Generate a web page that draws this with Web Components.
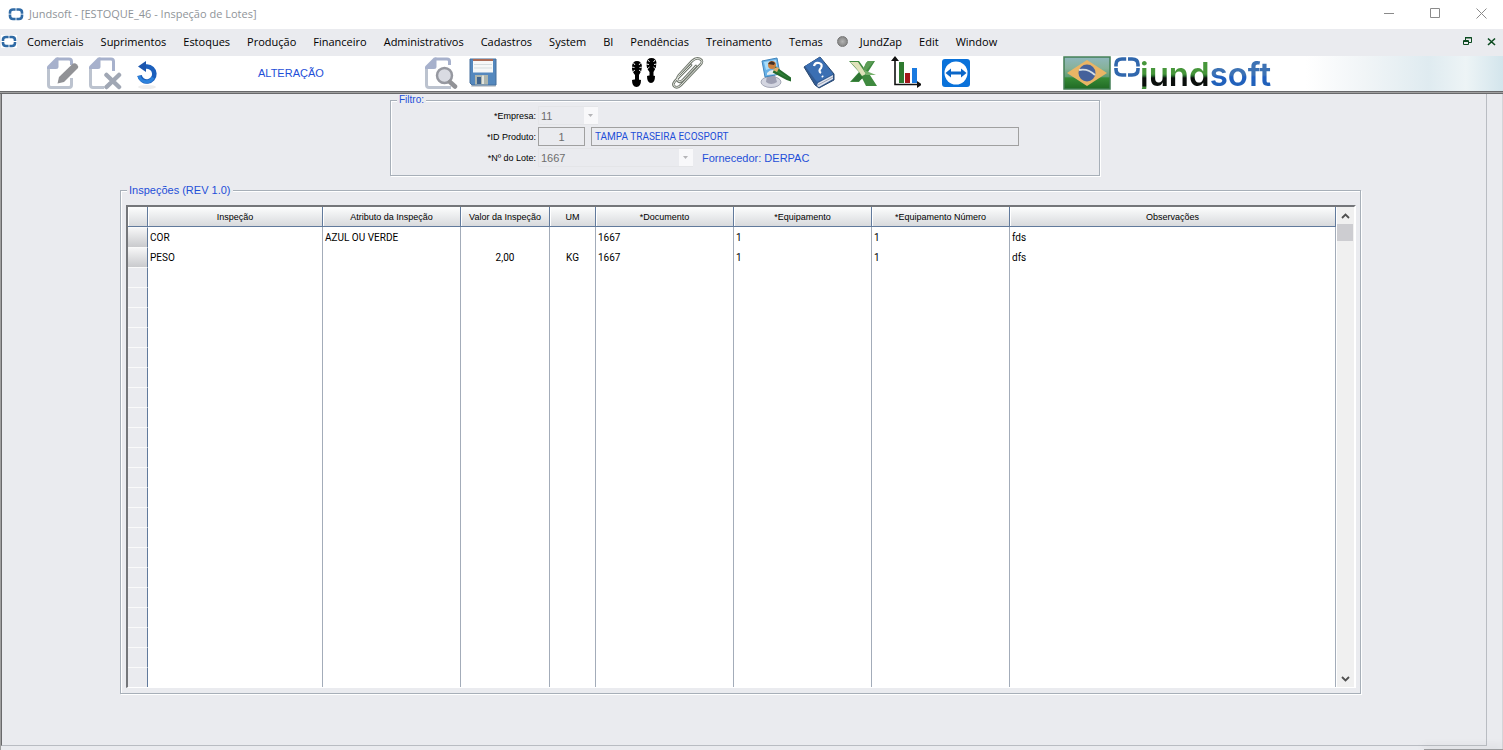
<!DOCTYPE html>
<html lang="pt-BR">
<head>
<meta charset="utf-8">
<title>Jundsoft - [ESTOQUE_46 - Inspeção de Lotes]</title>
<style>
html, body { margin: 0; min-height: 100%; background: #eaebef; }
body {
  --ui: "Open Sans", "Noto Sans", sans-serif;
  --text: "Liberation Sans", Arial, sans-serif;
  --data: Roboto, "Liberation Sans", sans-serif;
  --face: #eaebef;
  --blue: #1f4fd8;
  --edge: #a7afb8;
  font: 9px/16px var(--text);
  color: #000;
}
</style>
</head>
<body>
<jund-app></jund-app>

<template id="t-title">
  <style>
    :host { display: flex; align-items: center; box-sizing: border-box; height: 29px; background: #fff; padding: 0 0 2px 8px; font: 11px/16px var(--ui); color: #8f9499; }
    svg { display: block; }
    h1 { font: inherit; margin: 0 auto 0 5px; }
    button { width: 46px; height: 27px; padding: 0 0 0 2px; border: 0; background: none; display: grid; place-items: center; }
  </style>
  <svg width="16" height="16" viewBox="0 0 16 16" fill="none" stroke="#2f6aa5" stroke-width="2.600"><path d="M7.600 3.500H5Q2 3.500 2 6.500V7.800M8.400 3.500H11Q14 3.500 14 6.500V7.800M2 8.600V10Q2 13 5 13H7.600M14 8.600V10Q14 13 11 13H8.400"/></svg>
  <h1><slot></slot></h1>
  <button aria-label="Minimizar"><svg width="11" height="11" stroke="#8a8a8a"><path d="M0 5.500H10"/></svg></button>
  <button aria-label="Maximizar"><svg width="11" height="11" stroke="#8a8a8a" fill="none"><path d="M.5 .5H9.500V9.500H.5Z"/></svg></button>
  <button aria-label="Fechar"><svg width="11" height="11" stroke="#8a8a8a"><path d="M.5 .5L10.500 10.500M10.500 .5L.5 10.500"/></svg></button>
</template>

<template id="t-menu">
  <style>
    :host { display: flex; align-items: center; box-sizing: border-box; height: 27px; background: var(--face); padding: 0 7px 2px 1px; }
    .mark { display: block; margin-right: 10px; background: #fff; }
    nav { display: flex; gap: 17px; flex: 1; align-items: center; }
    .win { border: 0; background: none; padding: 0; margin-left: 15px; display: grid; }
    svg { display: block; }
  </style>
  <svg class="mark" width="16" height="13" viewBox="0 0 16 13" fill="none" stroke="#2f6aa5" stroke-width="2.600"><path d="M7.600 2H5Q2 2 2 5V6M8.400 2H11Q14 2 14 5V6M2 7V8Q2 11 5 11H7.600M14 7V8Q14 11 11 11H8.400"/></svg>
  <nav><slot></slot></nav>
  <button class="win" aria-label="Restaurar janela"><svg width="9" height="9" fill="none" stroke="#0c4a20"><path d="M3 .5H8.500V5.500H6M2.500 0V3M2 1H9M.5 3.500H5.500V7.500H.5ZM0 4.500H6"/></svg></button>
  <button class="win" aria-label="Fechar janela"><svg width="9" height="9" fill="none" stroke="#0c4a20" stroke-width="1.600"><path d="M1 1.500L8 8M8 1.500L1 8"/></svg></button>
</template>

<template id="t-item">
  <style>
    :host { display: block; }
    button { font: 11px/20px var(--ui); border: 0; padding: 0; background: none; color: #000; white-space: nowrap; display: block; }
  </style>
  <button><slot></slot></button>
</template>

<template id="t-tool">
  <style>
    :host { display: block; }
    button { border: 0; padding: 0; background: none; display: block; }
    ::slotted(svg) { display: block; }
  </style>
  <button><slot></slot></button>
</template>

<template id="t-bar">
  <style>
    :host { display: flex; align-items: center; height: 35px; background: #fff; padding-left: 46px; }
    .group { display: flex; align-items: center; flex: none; padding-bottom: 2px; }
    .left { width: 212px; gap: 8px; }
    .mode { width: 166px; font: 11px/16px var(--text); color: var(--blue); padding-bottom: 2px; }
    .find { width: 206px; gap: 11px; }
    .aux { width: 130px; gap: 12px; }
    .apps { width: 303px; gap: 11px; }
    .brand { gap: 3px; }
    .sky { flex: 1; align-self: stretch; background: linear-gradient(90deg, #fff 15%, #f1f5f7 40%, #dfebf0 68%, #edf4f6 84%, #d3e5ec); }
    .logo { display: flex; align-items: flex-start; height: 33px; }
    .mark { margin-top: 1px; }
    .word { font: 600 33px/37px Inter, sans-serif; color: transparent; }
    .word span { display: inline-block; background-clip: text; -webkit-background-clip: text; }
    .a { background-image: linear-gradient(#46963a 18px, #24662a 20px, #0a0f0c 22px, #0a0f0c 30px, #3f8c38 31px, #3f8c38 33px, transparent 33px); }
    .b { background-image: linear-gradient(#3d72b4 19px, #1f5fc0 21px, #2262b8 30px); }
  </style>
  <div class="group left">
    <jund-tool label="Editar"><svg width="34" height="34" viewBox="0 0 34 34"><path d="M25.500 22V29Q25.500 31.500 23 31.500H5Q2.500 31.500 2.500 29V12" fill="none" stroke="#bcc3cf" stroke-width="3"/><path d="M1 13V10.500L10 1.500H12.500V10.500Q12.500 13 10 13Z" fill="#a7b1cc"/><path d="M11 3H23Q25.500 3 25.500 5.500V9" fill="none" stroke="#a7b1cc" stroke-width="3"/><path d="M13 21L27 7.500Q29 6.500 31 8.500Q33 10.500 32 12L18 26L11.500 27.500Z" fill="#919296"/></svg></jund-tool>
    <jund-tool label="Excluir"><svg width="34" height="34" viewBox="0 0 34 34"><path d="M16 31.500H5Q2.500 31.500 2.500 29V12" fill="none" stroke="#bcc3cf" stroke-width="3"/><path d="M1 13V10.500L10 1.500H12.500V10.500Q12.500 13 10 13Z" fill="#a7b1cc"/><path d="M11 3H23Q25.500 3 25.500 5.500V15" fill="none" stroke="#a7b1cc" stroke-width="3"/><path d="M18.500 19L31 31M31 19L18.500 31" stroke="#a0a7b4" stroke-width="4.500" stroke-linecap="round"/></svg></jund-tool>
    <jund-tool label="Desfazer"><svg width="34" height="34" viewBox="0 0 34 34"><ellipse cx="17" cy="31" rx="9" ry="2" fill="#eee"/><path d="M12 10.500H17A7.500 7.500 0 1 1 9.500 19.500" fill="none" stroke="#1b5fbc" stroke-width="4.600"/><path d="M9 20A7.500 7.500 0 0 0 23 21.500" fill="none" stroke="#2c82dc" stroke-width="3"/><path d="M8 10.500L16 5V16Z" fill="#1b56ae"/></svg></jund-tool>
  </div>
  <div class="mode">ALTERAÇÃO</div>
  <div class="group find">
    <jund-tool label="Pesquisar"><svg width="34" height="34" viewBox="0 0 34 34"><path d="M27 31.500H5Q2.500 31.500 2.500 29V12" fill="none" stroke="#bcc3cf" stroke-width="3"/><path d="M1 13V10.500L10 1.500H12.500V10.500Q12.500 13 10 13Z" fill="#a7b1cc"/><path d="M11 3H23Q25.500 3 25.500 5.500V9" fill="none" stroke="#a7b1cc" stroke-width="3"/><circle cx="20.500" cy="19.500" r="8" fill="#d9dbe2" stroke="#fff" stroke-width="5"/><circle cx="20.500" cy="19.500" r="7.500" fill="#d9dbe2" stroke="#9698a0" stroke-width="2.500"/><path d="M26 26L31 30.500" stroke="#919296" stroke-width="4.500" stroke-linecap="round"/></svg></jund-tool>
    <jund-tool label="Salvar"><svg width="28" height="34" viewBox="0 0 28 34"><rect x="2" y="28" width="25" height="3" rx="1" fill="#cfd2d5"/><path d="M1 3H27V29H3L1 27Z" fill="#5488be" stroke="#456f9c"/><rect x="4" y="3.500" width="20" height="13" fill="#f6f8f8"/><rect x="4" y="3" width="20" height="2" fill="#ab6a55"/><path d="M5 8.500H23M5 12H23" stroke="#d5dddf"/><rect x="6" y="19" width="13" height="9.500" fill="#aeb6ae"/><rect x="8" y="21" width="4" height="7" fill="#3f638c"/><path d="M14 19.500V28" stroke="#e2e5df" stroke-width="2"/></svg></jund-tool>
  </div>
  <div class="group aux">
    <jund-tool label="Passos"><svg width="28" height="34" viewBox="0 0 28 34"><g fill="#000"><path d="M7 5Q11.500 5 12 10.500Q12 15 9 19V24H5V19Q1.500 15 2 10.500Q2.500 5 7 5ZM2 24Q6.500 22.500 11 24Q11 31 6.500 31Q2 31 2 24Z"/><path d="M21.500 2Q26 2 26.500 7Q26.500 12 23.500 16V21H19.500V16Q16 12 16.500 7Q17 2 21.500 2ZM17 20Q21 18.500 25 20Q25 27 21 27Q17 27 17 20Z"/></g><path d="M3.500 7L5 9M1.500 11L4.500 11.500M2.500 16L5 14M10.500 7L9 9M12.500 11L9.500 11.500M11.500 16L9 14M18 4L19.500 6M16 8L19 8.500M17 13L19.500 11M25 4L23.500 6M27 8L24 8.500M26 13L23.500 11" stroke="#fff" stroke-width=".9"/></svg></jund-tool>
    <jund-tool label="Anexos"><svg width="34" height="34" viewBox="0 0 34 34" fill="none" stroke-linecap="round"><path d="M21 9L6 24Q2 28 4 30Q7 33 11 29L30 9Q34 5 30 3Q26 1 22 5L9 19Q6 23 8 25Q10 27 13 24L26 10" stroke="#737970" stroke-width="2.600"/><path d="M21 9L6 24Q2 28 4 30Q7 33 11 29L30 9Q34 5 30 3Q26 1 22 5L9 19Q6 23 8 25Q10 27 13 24L26 10" stroke="#e0e4dc" stroke-width="1"/></svg></jund-tool>
  </div>
  <div class="group apps">
    <jund-tool label="Suporte"><svg width="32" height="34" viewBox="0 0 32 34"><ellipse cx="11" cy="26" rx="10" ry="5.500" fill="#d3d5e0" stroke="#a6a9b8"/><path d="M7 19H15L17 26Q11 30 6 26Z" fill="#9d9fb2"/><path d="M2 5L17 2L20 18L5 21Z" fill="#69b2e8" stroke="#4186bd"/><path d="M4 6L16 4L17 10L6 14Z" fill="#a9ddfa"/><circle cx="12" cy="9" r="4" fill="#cc8140"/><path d="M8 8Q11 3 15 7L14 9Z" fill="#443027"/><path d="M7 17Q11 12 17 15V18L7 19Z" fill="#e4edf0"/><path d="M16 12L30 22L30 24L27 23L14 16Z" fill="#2f8438" stroke="#246a2c" stroke-width="2"/><path d="M13 14Q16 10 19 12L17 16Z" fill="#e0ad6e"/></svg></jund-tool>
    <jund-tool label="Ajuda"><svg width="32" height="34" viewBox="0 0 32 34"><path d="M1 11L17 1L31 18V24L16 32L12 29Z" fill="#315b94" stroke="#28476f"/><path d="M2 10L17 1L30 18L14 26Z" fill="#3b6fb3"/><path d="M15 27L30 19V23L16 31Q13 30 15 27Z" fill="#e2e5ef"/><path d="M15 29L30 21" stroke="#9aa3b5"/><path d="M11 10Q12 6 16 7Q20 8 18 12Q15 15 18 17M19 20L20 21" fill="none" stroke="#fff" stroke-width="2.200"/></svg></jund-tool>
    <jund-tool label="Excel"><svg width="32" height="34" viewBox="-2 0 32 34"><path d="M1 5H11L16 12L18 7L20 5H27L20 16L29 30H18L14 22L11 26H2L11 16Z" fill="#3f8a3f"/><path d="M2 6H10L18 18L14 20Q8 11 2 6Z" fill="#dfe2ba"/><path d="M18 7L20 5H26L17 16L15 13Z" fill="#5c9c55"/><path d="M11 17L15 22L11 25H4Z" fill="#2e7434"/><path d="M16 14L28 19L18 19Z" fill="#76b06c"/></svg></jund-tool>
    <jund-tool label="Gráficos"><svg width="32" height="34" viewBox="-2 0 32 34"><rect x="8" y="6" width="5" height="21" fill="#2e7a2f"/><rect x="14" y="17" width="5" height="10" fill="#a3171b"/><rect x="21" y="12" width="5" height="15" fill="#1a7ae0"/><path d="M4 3V28.500H28" fill="none" stroke="#111" stroke-width="1.600"/><path d="M0 5L4 0L8 5ZM26 25L31 28.500L26 32Z" fill="#111"/></svg></jund-tool>
    <jund-tool label="TeamViewer"><svg width="46" height="34" viewBox="-1 0 46 34"><rect x="9" y="3" width="28" height="28" rx="3" fill="#0a72da"/><circle cx="23" cy="17" r="11.500" fill="#fff"/><path d="M12.500 17L18 12.500V15.500H28V12.500L33.500 17L28 21.500V18.500H18V21.500Z" fill="#0a66c8"/></svg></jund-tool>
  </div>
  <div class="group brand">
    <jund-tool label="Português (Brasil)"><svg width="48" height="34" viewBox="0 0 48 34"><defs><linearGradient id="g" x2="0" y2="1"><stop offset="0" stop-color="#8fb7bd"/><stop offset=".35" stop-color="#87b29a"/><stop offset=".62" stop-color="#5f9c72"/><stop offset=".65" stop-color="#368a36"/><stop offset="1" stop-color="#206a24"/></linearGradient></defs><rect x="1" y="1" width="46" height="32" fill="url(#g)" stroke="#437f56" stroke-width="1.500"/><path d="M24 4L44 17L24 30L4 17Z" fill="#e9b565"/><circle cx="24" cy="17" r="8.500" fill="#44619b"/><path d="M16 14Q25 12 32 19" fill="none" stroke="#d5dee4" stroke-width="1.800"/></svg></jund-tool>
    <div class="logo" role="img" aria-label="jundsoft">
      <svg class="mark" width="26" height="22" viewBox="0 0 26 22" fill="none" stroke="#3067ad" stroke-width="3.600"><path d="M12.200 2H8Q2 2 2 7.500V9.500M14 2H18Q24 2 24 7.500V9.500M2 11V12.500Q2 18 8 18H12.200M24 11V12.500Q24 18 18 18H14"/></svg>
      <div class="word"><span class="a">jund</span><span class="b">soft</span></div>
    </div>
  </div>
  <div class="sky"></div>
</template>

<template id="t-group">
  <style>
    :host { display: block; }
    fieldset { margin: 0; padding: 0; border: 1px solid var(--edge); box-shadow: 1px 1px #fff, inset 1px 1px #fff; min-width: 0; }
    legend { margin-left: 6px; padding: 0 2px; background: var(--face); color: var(--blue); font-size: var(--legend, 10px); line-height: 12px; }
  </style>
  <fieldset><legend></legend><slot></slot></fieldset>
</template>

<template id="t-filter">
  <style>
    :host { display: grid; grid-template-columns: 145px 1fr; grid-auto-rows: 19px; column-gap: 2px; row-gap: 2px; padding: 0 80px 8px 0; align-items: center; }
    label { text-align: right; white-space: nowrap; }
    .row { display: flex; align-items: center; height: 19px; }
    input { box-sizing: border-box; height: 19px; border: 1px solid #a0a0a0; background: none; padding: 0 3px; margin: 0; font: 10px/16px var(--data); color: var(--blue); border-radius: 0; min-width: 0; }
    .id { width: 47px; margin-right: 6px; text-align: center; font: 11px/16px var(--text); color: #6d6d6d; }
    .name { flex: 1; }
    .combo { position: relative; height: 19px; }
    .combo svg { position: absolute; right: 0; top: 1px; pointer-events: none; }
    .short { width: 60px; }
    .long { width: 155px; margin-right: 9px; }
    select { appearance: none; width: 100%; height: 19px; margin: 0; border: 1px solid #e4e5e8; border-radius: 0; background: none; padding: 0 2px; font: 11px/16px var(--text); color: #6d6d6d; opacity: 1; }
    output { font: 11px/16px var(--text); color: var(--blue); white-space: nowrap; }
  </style>
  <label for="emp">*Empresa:</label>
  <div class="row"><div class="combo short"><select id="emp" disabled><option>11</option></select><svg width="14" height="17"><rect width="14" height="17" fill="#f8f8fa"/><path d="M4 7H9L6.500 10Z" fill="#b5b5b8"/></svg></div></div>
  <label for="prod">*ID Produto:</label>
  <div class="row"><input class="id" id="prod" value="1" readonly><input class="name" aria-label="Descrição do produto" value="TAMPA TRASEIRA ECOSPORT" readonly></div>
  <label for="lote">*Nº do Lote:</label>
  <div class="row"><div class="combo long"><select id="lote" disabled><option>1667</option></select><svg width="14" height="17"><rect width="14" height="17" fill="#f8f8fa"/><path d="M4 7H9L6.500 10Z" fill="#b5b5b8"/></svg></div><output>Fornecedor: DERPAC</output></div>
</template>

<template id="t-grid">
  <style>
    :host { display: flex; margin: 9px 4px 5px 5px; border: solid; border-width: 2px 2px 1px 2px; border-color: #74767a #fff #fff #74767a; background: #fff; }
    table { flex: 1; width: 100%; table-layout: fixed; border-collapse: separate; border-spacing: 0; }
    th, td { box-sizing: border-box; height: 20px; padding: 2px 2px 0; font: 10px/16px var(--data); white-space: nowrap; border-right: 1px solid #a3acb9; text-align: left; overflow: hidden; }
    thead th { padding: 0 2px; font: 9px/16px var(--text); border-right-color: #617a9c; border-bottom: 1px solid #617a9c; background: linear-gradient(#fcfdfd, #d8dadd); box-shadow: inset 1px 0 #fff; text-align: center; }
    tbody th { border-right-color: #617a9c; border-top: 1px solid #fafafa; background: var(--face); }
    tbody th.on { background: linear-gradient(#f6f6f7, #c9cacd); }
    .mid { text-align: center; }
    .bar { width: 18px; background: #f0f0f0; display: flex; flex-direction: column; border-left: 1px solid #fff; box-sizing: border-box; }
    .bar button { height: 17px; border: 0; padding: 0; background: none; display: grid; place-items: center; }
    .thumb { height: 17px; background: #cdcdd1; margin-right: 1px; }
    .bar button:last-child { margin-top: auto; }
  </style>
  <table>
    <colgroup><col style="width:20px"><col style="width:175px"><col style="width:138px"><col style="width:89px"><col style="width:46px"><col style="width:138px"><col style="width:138px"><col style="width:138px"><col></colgroup>
    <thead><tr><th></th><th>Inspeção</th><th>Atributo da Inspeção</th><th>Valor da Inspeção</th><th>UM</th><th>*Documento</th><th>*Equipamento</th><th>*Equipamento Número</th><th>Observações</th></tr></thead>
    <tbody></tbody>
  </table>
  <div class="bar">
    <button aria-label="Rolar para cima"><svg width="9" height="6" fill="none" stroke="#505050" stroke-width="1.800"><path d="M1 5L4.500 1.500L8 5"/></svg></button>
    <div class="thumb"></div>
    <button aria-label="Rolar para baixo"><svg width="9" height="6" fill="none" stroke="#505050" stroke-width="1.800"><path d="M1 1L4.500 4.500L8 1"/></svg></button>
  </div>
</template>

<template id="t-app">
  <style>
    :host { display: flex; flex-direction: column; min-height: 100vh; background: var(--face); }
    .rule { height: 1px; background: #a0a0a0; border: solid #69696b; border-width: 1px 0; }
    .client { flex: 1; display: flex; border-left: 1px solid #a0a0a0; }
    .form { flex: 1; border-left: 1px solid #69696b; border-right: 1px solid #b9bcc2; border-bottom: 1px solid #b9bcc2; margin-bottom: 4px; min-width: 0; }
    .side { width: 15px; border-right: 1px solid #d4d5d9; }
    .filter { max-width: 710px; margin: 0 auto; padding-left: 2px; }
    .lots { margin: 8px 125px 0 118px; --legend: 11px; }
    .dot { width: 11px; height: 11px; margin: 0 -5px 0 -3px; border-radius: 50%; background: radial-gradient(#b4b4b4, #777); border: 1px solid #777; box-sizing: border-box; }
    .corner { height: 1px; width: 79px; align-self: flex-end; background: #9a9b9e; margin-top: -1px; box-shadow: 0 -1px 8px #9a9b9e; }
  </style>
  <jund-title>Jundsoft - [ESTOQUE_46 - Inspeção de Lotes]</jund-title>
  <jund-menu>
    <jund-item>Comerciais</jund-item><jund-item>Suprimentos</jund-item><jund-item>Estoques</jund-item><jund-item>Produção</jund-item><jund-item>Financeiro</jund-item><jund-item>Administrativos</jund-item><jund-item>Cadastros</jund-item><jund-item>System</jund-item><jund-item>BI</jund-item><jund-item>Pendências</jund-item><jund-item>Treinamento</jund-item><jund-item>Temas</jund-item><span class="dot"></span><jund-item>JundZap</jund-item><jund-item>Edit</jund-item><jund-item>Window</jund-item>
  </jund-menu>
  <jund-bar></jund-bar>
  <div class="rule"></div>
  <div class="client">
    <main class="form">
      <jund-group class="filter" label="Filtro:"><jund-filter></jund-filter></jund-group>
      <jund-group class="lots" label="Inspeções (REV 1.0)"><jund-grid></jund-grid></jund-group>
    </main>
    <div class="side"></div>
  </div>
  <div class="corner"></div>
</template>

<script>
class Base extends HTMLElement {
  constructor() {
    super();
    const t = document.getElementById(this.constructor.tpl);
    this.attachShadow({ mode: "open" }).append(t.content.cloneNode(true));
  }
}
class JundTitle extends Base { static tpl = "t-title"; }
class JundMenu extends Base { static tpl = "t-menu"; }
class JundItem extends Base { static tpl = "t-item"; }
class JundBar extends Base { static tpl = "t-bar"; }
class JundFilter extends Base { static tpl = "t-filter"; }
class JundApp extends Base { static tpl = "t-app"; }
class JundTool extends Base {
  static tpl = "t-tool";
  connectedCallback() {
    this.shadowRoot.querySelector("button").setAttribute("aria-label", this.getAttribute("label"));
  }
}
class JundGroup extends Base {
  static tpl = "t-group";
  connectedCallback() {
    this.shadowRoot.querySelector("legend").textContent = this.getAttribute("label");
  }
}
class JundGrid extends Base {
  static tpl = "t-grid";
  connectedCallback() {
    const rows = [
      ["COR", "AZUL OU VERDE", "", "", "1667", "1", "1", "fds"],
      ["PESO", "", "2,00", "KG", "1667", "1", "1", "dfs"]
    ];
    const body = this.shadowRoot.querySelector("tbody");
    for (let r = 0; r < 23; r++) {
      const tr = body.insertRow();
      const head = document.createElement("th");
      if (rows[r]) head.className = "on";
      tr.append(head);
      for (let c = 0; c < 8; c++) {
        const td = tr.insertCell();
        if (rows[r]) td.textContent = rows[r][c];
        if (c === 2 || c === 3) td.className = "mid";
      }
    }
  }
}
customElements.define("jund-tool", JundTool);
customElements.define("jund-item", JundItem);
customElements.define("jund-title", JundTitle);
customElements.define("jund-menu", JundMenu);
customElements.define("jund-bar", JundBar);
customElements.define("jund-filter", JundFilter);
customElements.define("jund-grid", JundGrid);
customElements.define("jund-group", JundGroup);
customElements.define("jund-app", JundApp);
</script>
</body>
</html>
